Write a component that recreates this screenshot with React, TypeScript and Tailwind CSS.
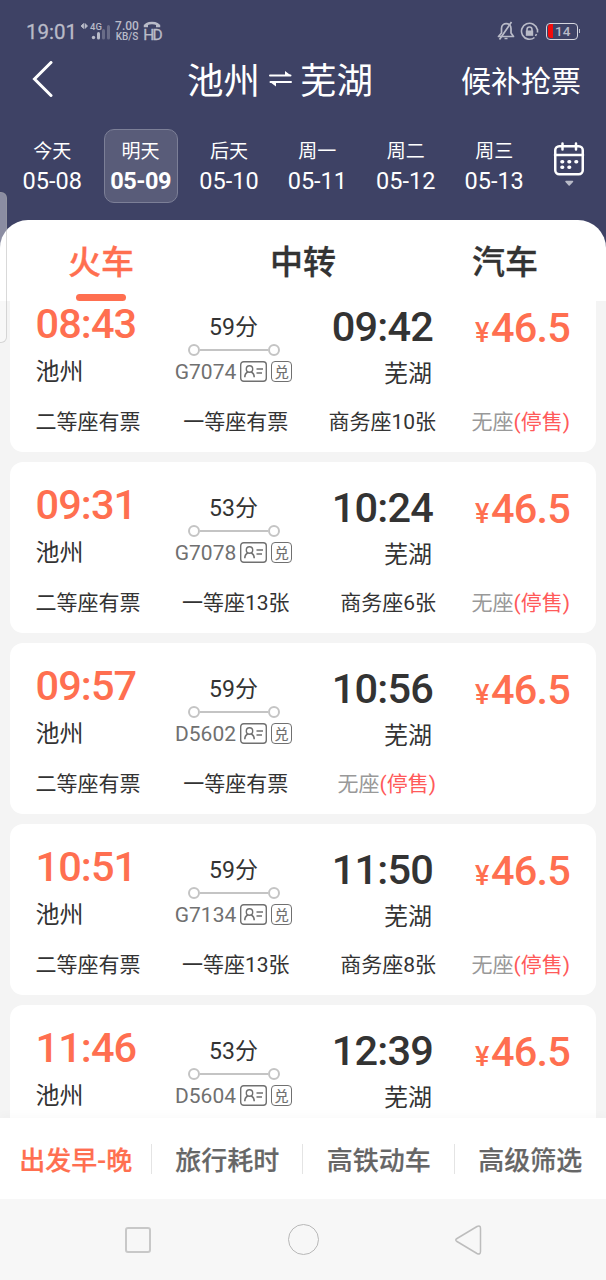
import { useState } from "react";

const days = [
  { label: "今天", date: "05-08" },
  { label: "明天", date: "05-09" },
  { label: "后天", date: "05-10" },
  { label: "周一", date: "05-11" },
  { label: "周二", date: "05-12" },
  { label: "周三", date: "05-13" },
];

const tabs = ["火车", "中转", "汽车"];

const filters = ["出发早-晚", "旅行耗时", "高铁动车", "高级筛选"];

const trains = [
  { no: "G7074", start: "08:43", end: "09:42", cost: "59分", seats: ["二等座有票", "一等座有票", "商务座10张", "无座"] },
  { no: "G7078", start: "09:31", end: "10:24", cost: "53分", seats: ["二等座有票", "一等座13张", "商务座6张", "无座"] },
  { no: "D5602", start: "09:57", end: "10:56", cost: "59分", seats: ["二等座有票", "一等座有票", "无座"] },
  { no: "G7134", start: "10:51", end: "11:50", cost: "59分", seats: ["二等座有票", "一等座13张", "商务座8张", "无座"] },
  { no: "D5604", start: "11:46", end: "12:39", cost: "53分", seats: [] },
];

const seatAlign = ["text-left", "text-center", "text-right", "text-right"];

function StatusBar() {
  return (
    <div className="flex h-[52px] items-start justify-between pt-5 pr-[26px] pl-[26px] text-[#b9bbc8]">
      <div className="flex h-[22px] items-center">
        <span className="w-[50px] pt-px text-[20.5px] leading-[22px] [-webkit-text-stroke:0.3px]">19:01</span>
        <svg width="30" height="18" viewBox="0 0 30 18" className="ml-[5px]">
          <path d="M0 4l2.500-2.500v5zM4 1.500v5L6.500 4z" fill="currentColor" stroke="currentColor" strokeWidth="0.800" />
          <text x="9" y="8" fontSize="9.500" fontWeight="500" fill="currentColor">4G</text>
          <circle cx="12.500" cy="15.500" r="1.700" fill="currentColor" />
          <rect x="16" y="10" width="3" height="7.500" rx="1.500" fill="currentColor" />
          <rect x="21" y="7" width="3" height="10.500" rx="1.500" fill="currentColor" opacity="0.350" />
          <rect x="26" y="3" width="3" height="14.500" rx="1.500" fill="currentColor" opacity="0.350" />
        </svg>
        <div className="ml-[4px] flex w-6 flex-col items-center font-medium">
          <span className="text-[12px] leading-[12px]">7.00</span>
          <span className="text-[10px] leading-[10px]">KB/S</span>
        </div>
        <div className="ml-[4px] flex w-[18px] flex-col items-center">
          <svg width="18" height="7" viewBox="0 0 18 7">
            <path d="M2 5.500C3 .800 15 .800 16 5.500" fill="none" stroke="currentColor" strokeWidth="2.500" />
            <path d="M.800 3.800h4.200v2.400h-4.200zM13 3.800h4.200v2.400h-4.200z" fill="currentColor" />
          </svg>
          <span className="text-[15.5px] leading-[14px] tracking-[-1.8px] [-webkit-text-stroke:0.3px]">HD</span>
        </div>
      </div>
      <div className="flex h-[22px] items-center">
        <svg width="18" height="20" viewBox="0 0 18 20" fill="none" stroke="currentColor" strokeWidth="1.700">
          <path d="M1.500 15.500h15L14 12V7.500C14 1 4.500 1 4.500 7.500V12z" strokeLinejoin="round" />
          <path d="M14.500 1L2.500 18.500M7.500 17.500h3" />
        </svg>
        <svg width="19" height="19" viewBox="0 0 19 19" fill="none" stroke="currentColor" strokeWidth="1.600" className="ml-[5px]">
          <path d="M14.500 15.500A8 8 0 1 1 17.300 7.500M17.500 7v3.500M16.500 12l-1 2" />
          <path d="M7 9V7.500c0-3.400 5-3.400 5 0V9" />
          <rect x="5.800" y="8.500" width="7.400" height="5.300" fill="currentColor" stroke="none" />
        </svg>
        <div className="ml-[7px] flex h-[17px] w-8 items-center rounded-[4px] border border-[#d5d6de] pl-px">
          <span className="h-[14px] w-[5px] rounded-l-[3px] bg-[#f40b0b]" />
          <span className="ml-0.5 text-[13.5px] leading-[15px] font-medium">14</span>
        </div>
        <span className="ml-px h-1 w-px bg-[#b9bbc8]" />
      </div>
    </div>
  );
}

function DayPicker() {
  const [active, setActive] = useState(1);

  return (
    <div className="mt-[21px] flex h-[74px] pl-2">
      {days.map((day, i) => (
        <div key={day.date} className="flex w-[88.4px] shrink-0 justify-center">
          <button
            onClick={() => setActive(i)}
            className={`flex h-[74px] w-[74px] flex-col items-center rounded-[10px] border pt-[7px] ${
              active === i ? "border-[#7c7f97] bg-[#595c79]" : "border-transparent"
            }`}
          >
            <span className="text-[19px] leading-[30px]">{day.label}</span>
            <span className={`text-[23.5px] leading-[28px] ${active === i ? "font-bold tracking-[-0.5px]" : ""}`}>
              {day.date}
            </span>
          </button>
        </div>
      ))}
      <svg width="32" height="46" viewBox="0 0 32 46" fill="none" stroke="#fff" strokeWidth="2.500" className="mt-[13px] ml-[14.5px]">
        <rect x="2.250" y="4.250" width="27.500" height="28" rx="4" />
        <path d="M2 13h28M9.500 1.500v6M23 1.500v6" strokeLinecap="round" />
        <path d="M9 19.800h.6M16 19.800h.6M23 19.800h.6M9 25.300h.6M16 25.300h.6" strokeWidth="3.600" strokeLinecap="round" />
        <path d="M13 39.500h6.500L16.200 43z" fill="#b9bbc8" stroke="#b9bbc8" strokeWidth="1.500" strokeLinejoin="round" />
      </svg>
    </div>
  );
}

function TrainCard({ train }: { train: (typeof trains)[number] }) {
  return (
    <div className="h-[171px] shrink-0 rounded-[13px] bg-white pr-[26px] pl-[25.5px] text-[#333]">
      <div className="grid h-[122px] grid-cols-[124px_148px_125.5px_137px]">
        <div className="pt-[22.5px]">
          <div className="text-[41.5px] leading-[42px] font-medium tracking-[-0.9px] text-[#ff6f50]">{train.start}</div>
          <div className="mt-[9px] text-[24px] leading-[36px]">池州</div>
        </div>
        <div className="flex flex-col items-center pt-[33px]">
          <span className="text-[23px] leading-[28px]">{train.cost}</span>
          <div className="mt-[2px] flex w-[92px] items-center">
            <span className="size-3 rounded-full border-2 border-[#c4c4c4]" />
            <span className="h-0.5 flex-1 bg-[#c4c4c4]" />
            <span className="size-3 rounded-full border-2 border-[#c4c4c4]" />
          </div>
          <div className="mt-[3px] flex items-center text-[#707070]">
            <span className="text-[21px] leading-[26px]">{train.no}</span>
            <svg width="27" height="21" viewBox="0 0 27 21" fill="none" stroke="currentColor" strokeWidth="1.400" className="ml-1">
              <rect x=".7" y=".7" width="25.600" height="19.600" rx="3" />
              <circle cx="9.500" cy="8" r="3.200" />
              <path d="M4.800 16.300c0-2.500 1-4.500 3-5.300M14.200 16.300c0-2.500-1-4.500-3-5.300M16.500 8h6.500M16.500 12h5.500" strokeWidth="1.600" />
            </svg>
            <span className="ml-1 flex h-[21px] w-[21px] items-center justify-center rounded-[4px] border-[1.5px] border-[#707070] text-[14px] leading-[18px] [-webkit-text-stroke:0.2px]">
              兑
            </span>
          </div>
        </div>
        <div className="pt-[21px] text-right">
          <div className="text-[41.5px] leading-[50px] font-medium tracking-[-0.8px]">{train.end}</div>
          <div className="mt-[4px] pr-px text-[24px] leading-[36px]">芜湖</div>
        </div>
        <div className="pt-[22px] text-right font-medium text-[#ff6f50]">
          <span className="mr-[1.5px] text-[27px] leading-[50px]">¥</span>
          <span className="text-[41.5px] leading-[50px] tracking-[-0.8px]">46.5</span>
        </div>
      </div>
      <div className="grid grid-cols-[120px_160.5px_120px_134px] text-[21px] leading-[38px] whitespace-nowrap">
        {train.seats.map((seat, i) =>
          seat === "无座" ? (
            <div key={seat} className={`text-[#999] ${seatAlign[i]}`}>
              无座<span className="text-[#ff5a5a]">(停售)</span>
            </div>
          ) : (
            <div key={seat} className={seatAlign[i]}>
              {seat}
            </div>
          ),
        )}
      </div>
    </div>
  );
}

export default function App() {
  const [tab, setTab] = useState(0);
  const [filter, setFilter] = useState(0);

  return (
    <div className="relative flex h-[1280px] w-[606px] flex-col overflow-hidden bg-[#f4f4f4] font-[Roboto,'Noto_Sans_CJK_SC',sans-serif]">
      <div className="z-10 shrink-0 bg-[#3e4265]">
        <header className="h-[220px] text-white">
          <StatusBar />
          <div className="flex h-14 items-center pr-[25px] pl-8">
            <svg width="21" height="36" viewBox="0 0 21 36" fill="none" stroke="#fff" strokeWidth="3" strokeLinecap="round" className="-mt-0.5">
              <path d="M19 1.500L2.500 18L19 34.500" />
            </svg>
            <div className="ml-[134px] flex items-center pt-[4px] text-[36.5px] leading-[52px]">
              池州
              <svg width="23" height="18" viewBox="0 0 23 18" fill="none" stroke="#fff" strokeWidth="2" className="mx-[8.5px] -mt-[9px]">
                <path d="M1 6.500h20.500M1.500 13H22" strokeLinecap="round" />
                <path d="M16 2l6 4.500h-6zM7 17.500L1 13h6z" fill="#fff" stroke="none" />
              </svg>
              芜湖
            </div>
            <span className="ml-auto pt-[3px] text-[30px] leading-[53px]">候补抢票</span>
          </div>
          <DayPicker />
        </header>
        <div className="grid h-[81px] grid-cols-3 rounded-t-[28px] bg-white">
          {tabs.map((name, i) => (
            <button
              key={name}
              onClick={() => setTab(i)}
              className={`flex flex-col items-center pt-[18px] text-[33px] leading-[50px] font-medium [-webkit-text-stroke:0.3px] ${
                tab === i ? "text-[#ff6f50]" : "text-[#333]"
              }`}
            >
              {name}
              {tab === i && <span className="mt-1.5 h-[6.5px] w-[50px] rounded-full bg-[#ff6f50]" />}
            </button>
          ))}
        </div>
      </div>

      <div className="min-h-0 flex-1 overflow-hidden">
        <div className="-mt-[20.5px] flex flex-col gap-[10px] px-[10px]">
          {trains.map((train) => (
            <TrainCard key={train.no} train={train} />
          ))}
        </div>
      </div>

      <div className="z-10 grid h-[81px] shrink-0 grid-cols-4 items-center bg-white shadow-[0_-4px_8px_rgba(0,0,0,0.02)]">
        {filters.map((name, i) => (
          <button
            key={name}
            onClick={() => setFilter(i)}
            className={`h-[30px] pt-0.5 text-[26px] leading-[30px] font-medium [-webkit-text-stroke:0.2px] ${
              i > 0 ? "-ml-px border-l border-[#e4e4e4]" : ""
            } ${filter === i ? "text-[#ff6f50]" : "text-[#666]"}`}
          >
            {name}
          </button>
        ))}
      </div>

      <div className="flex h-[81px] shrink-0 items-center bg-[#f7f7f7] pl-[125px]">
        <span className="size-[26px] rounded-[3px] border-2 border-[#c8c8c8]" />
        <span className="ml-[137px] size-[31px] rounded-full border-[1.5px] border-[#b8b8b8]" />
        <svg width="27" height="30" viewBox="0 0 27 30" fill="none" stroke="#bdbdbd" strokeWidth="1.500" strokeLinejoin="round" className="ml-[136px]">
          <path d="M2 13.500L22 1.500Q25.500 0 25.500 3.500V26.500Q25.500 30 22 28.500L2 16.500Q-.5 15 2 13.500z" />
        </svg>
      </div>

      <div className="absolute top-[192px] left-0 z-20 h-[151px] w-[7px] rounded-r-[6px] border-y border-r border-[#a0a0a0]/40 bg-white/40" />
    </div>
  );
}
